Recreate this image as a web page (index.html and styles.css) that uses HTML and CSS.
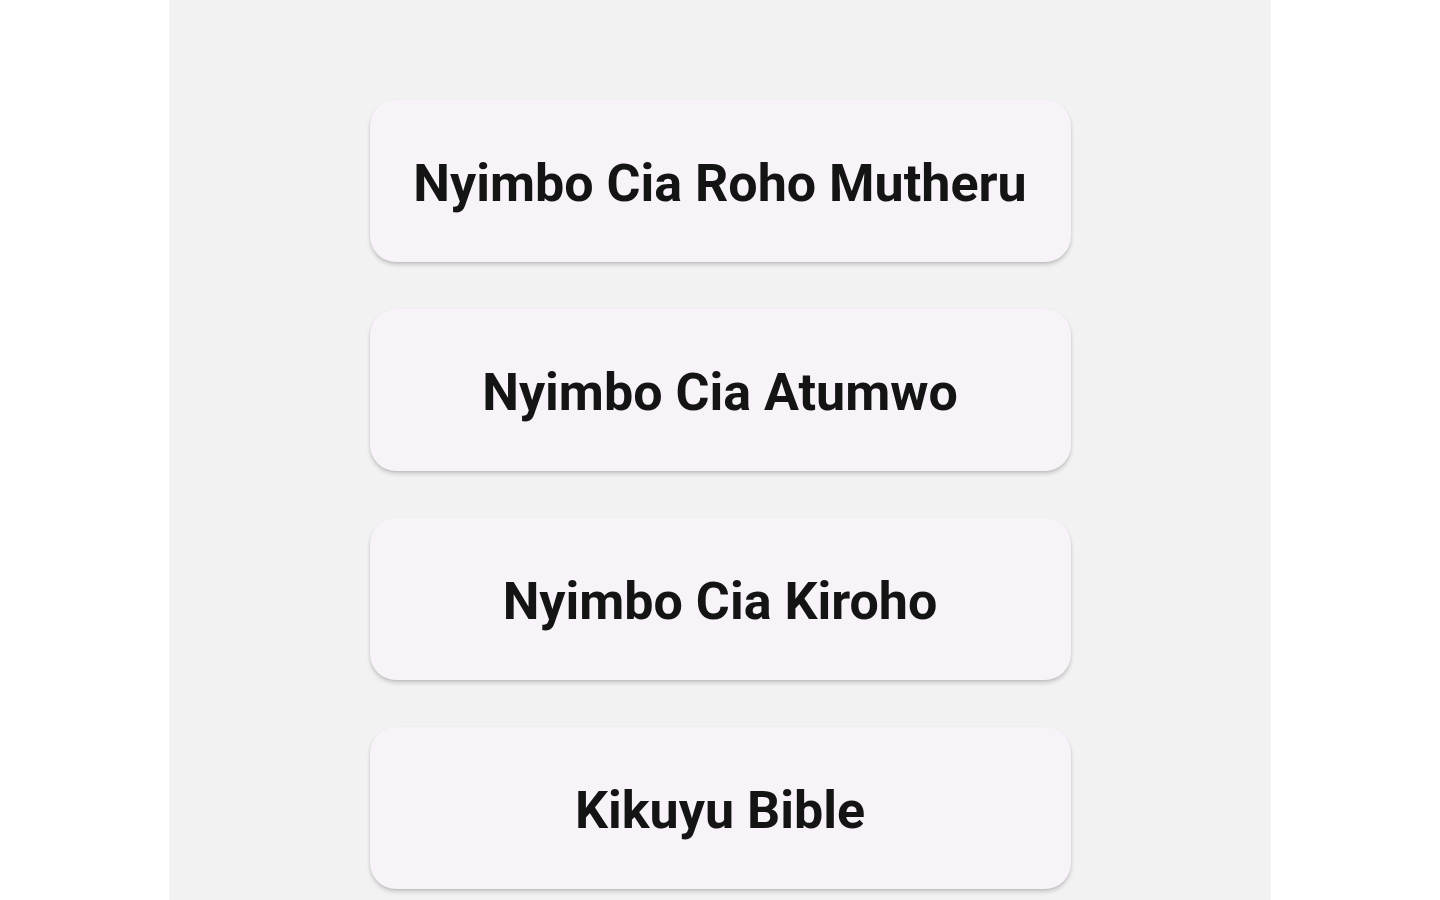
FILE: index.html
```html
<!DOCTYPE html>
<html lang="en">
<head>
<meta charset="utf-8">
<title>Nyimbo</title>
<link rel="stylesheet" href="styles.css">
</head>
<body>
<main class="panel">
  <ul class="menu">
    <li><button class="card">Nyimbo Cia Roho Mutheru</button></li>
    <li><button class="card">Nyimbo Cia Atumwo</button></li>
    <li><button class="card">Nyimbo Cia Kiroho</button></li>
    <li><button class="card">Kikuyu Bible</button></li>
  </ul>
</main>
</body>
</html>
```
FILE: styles.css
```css
html, body {
  margin: 0;
  padding: 0;
  height: 100%;
  background: #ffffff;
  overflow: hidden;
}
.panel {
  width: 1102px;
  height: 900px;
  margin: 0 auto;
  background: #f2f2f2;
  box-sizing: border-box;
  padding-top: 100px;
}
.menu {
  list-style: none;
  margin: 0;
  padding: 0;
  display: flex;
  flex-direction: column;
  align-items: center;
  gap: 47px;
}
.menu li {
  display: flex;
}
.card {
  width: 701px;
  height: 162px;
  border: none;
  border-radius: 26px;
  background: #f7f3f9;
  box-shadow: 0 3px 4px rgba(0,0,0,0.16), 0 1px 2px rgba(0,0,0,0.08);
  font-family: Roboto, "Liberation Sans", sans-serif;
  font-weight: 700;
  font-size: 52px;
  color: #141414;
  display: flex;
  align-items: center;
  justify-content: center;
  padding: 4px 0 0;
  cursor: pointer;
}
```
